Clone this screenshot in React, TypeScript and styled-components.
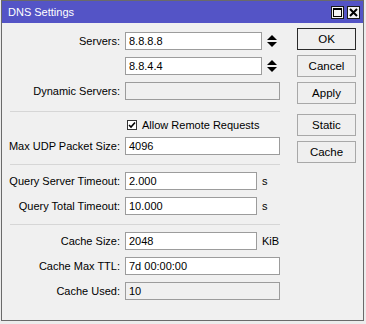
import React from "react";
import styled, { createGlobalStyle } from "styled-components";

const Global = createGlobalStyle`
  html, body { margin: 0; padding: 0; background: #f0f0f0; }
  body { font-family: "Liberation Sans", Arial, sans-serif; font-size: 11px; color: #000; }
`;

const Frame = styled.div`
  width: 366px;
  height: 324px;
  box-sizing: border-box;
  padding: 0 2px 3px 1px;
  background: #ececec;
`;

const Window = styled.div`
  height: 100%;
  box-sizing: border-box;
  border: 1px solid #6a6a6a;
  background: #f0f0f0;
  display: flex;
  flex-direction: column;
`;

const TitleBar = styled.div`
  height: 22px;
  flex: none;
  background: #5454c6;
  color: #fff;
  display: flex;
  align-items: center;
  justify-content: space-between;
  padding: 0 3px 0 6px;
  font-size: 11px;
`;

const TitleButtons = styled.div`
  display: flex;
  gap: 3px;
`;

const TitleButton = styled.div`
  width: 13px;
  height: 13px;
  box-sizing: border-box;
  border: 1px solid #1a1a1a;
  background: #f4f4f4;
  display: flex;
  align-items: center;
  justify-content: center;
`;

const Body = styled.div`
  display: flex;
  flex: 1;
`;

const Form = styled.div`
  width: 278px;
  padding-top: 9px;
  display: flex;
  flex-direction: column;
  gap: 7px;
`;

const Row = styled.div<{ $h?: number }>`
  display: grid;
  grid-template-columns: 118px 155px;
  column-gap: 5px;
  align-items: center;
  height: ${(p) => p.$h ?? 18}px;
`;

const Label = styled.div`
  text-align: right;
  white-space: nowrap;
`;

const Field = styled.div`
  display: flex;
  align-items: center;
  height: 100%;
`;

const Input = styled.div<{ $w?: number; $disabled?: boolean }>`
  width: ${(p) => p.$w ?? 155}px;
  height: 18px;
  box-sizing: border-box;
  border: 1px solid #9c9c9c;
  background: ${(p) => (p.$disabled ? "#f0f0f0" : "#ffffff")};
  padding-left: 3px;
  display: flex;
  align-items: center;
  white-space: nowrap;
  overflow: hidden;
`;

const Spinner = styled.div`
  width: 18px;
  padding-left: 5px;
  box-sizing: border-box;
  display: flex;
  align-items: center;
`;

const Unit = styled.span`
  margin-left: 5px;
`;

const Separator = styled.div<{ $top: number }>`
  height: 1px;
  margin: ${(p) => p.$top}px 0 0 8px;
  background: #d6d6d6;
`;

const CheckBox = styled.span`
  width: 10px;
  height: 10px;
  box-sizing: border-box;
  border: 1px solid #333;
  background: #fff;
  margin-left: 2px;
  margin-right: 5px;
  display: flex;
  align-items: center;
  justify-content: center;
`;

const ButtonCol = styled.div`
  margin-left: 17px;
  padding-top: 5px;
  display: flex;
  flex-direction: column;
  gap: 5px;
`;

const Button = styled.div<{ $default?: boolean; $space?: number }>`
  width: 59px;
  height: 22px;
  box-sizing: border-box;
  border: 1px solid ${(p) => (p.$default ? "#2a2a2a" : "#a8a8a8")};
  background: #efefef;
  display: flex;
  align-items: center;
  justify-content: center;
  margin-top: ${(p) => p.$space ?? 0}px;
  font-size: 11.5px;
`;

const Arrows = () => (
  <Spinner>
    <svg width="10" height="12" viewBox="0 0 10 12">
      <path d="M0 5 L5 0 L10 5 Z" fill="#000" />
      <path d="M0 7 L10 7 L5 12 Z" fill="#000" />
    </svg>
  </Spinner>
);

export default function App() {
  return (
    <>
      <Global />
      <Frame>
        <Window>
          <TitleBar>
            <span>DNS Settings</span>
            <TitleButtons>
              <TitleButton>
                <svg width="9" height="9" viewBox="0 0 9 9">
                  <rect x="0.5" y="0.5" width="8" height="8" fill="none" stroke="#000" />
                  <rect x="0" y="0" width="9" height="2" fill="#000" />
                </svg>
              </TitleButton>
              <TitleButton>
                <svg width="9" height="9" viewBox="0 0 9 9">
                  <path d="M1 1 L8 8 M8 1 L1 8" stroke="#000" strokeWidth="2" />
                </svg>
              </TitleButton>
            </TitleButtons>
          </TitleBar>
          <Body>
            <Form>
              <Row>
                <Label>Servers:</Label>
                <Field>
                  <Input $w={137}>8.8.8.8</Input>
                  <Arrows />
                </Field>
              </Row>
              <Row>
                <Label />
                <Field>
                  <Input $w={137}>8.8.4.4</Input>
                  <Arrows />
                </Field>
              </Row>
              <Row>
                <Label>Dynamic Servers:</Label>
                <Field>
                  <Input $disabled />
                </Field>
              </Row>
              <Separator $top={4} />
              <Row $h={11}>
                <Label />
                <Field>
                  <CheckBox>
                    <svg width="8" height="8" viewBox="0 0 8 8">
                      <path d="M1 4 L3 6 L7 1.5" fill="none" stroke="#000" strokeWidth="1.6" />
                    </svg>
                  </CheckBox>
                  <span>Allow Remote Requests</span>
                </Field>
              </Row>
              <Row>
                <Label>Max UDP Packet Size:</Label>
                <Field>
                  <Input>4096</Input>
                </Field>
              </Row>
              <Separator $top={2} />
              <Row>
                <Label>Query Server Timeout:</Label>
                <Field>
                  <Input $w={132}>2.000</Input>
                  <Unit>s</Unit>
                </Field>
              </Row>
              <Row>
                <Label>Query Total Timeout:</Label>
                <Field>
                  <Input $w={132}>10.000</Input>
                  <Unit>s</Unit>
                </Field>
              </Row>
              <Separator $top={2} />
              <Row>
                <Label>Cache Size:</Label>
                <Field>
                  <Input $w={132}>2048</Input>
                  <Unit>KiB</Unit>
                </Field>
              </Row>
              <Row>
                <Label>Cache Max TTL:</Label>
                <Field>
                  <Input>7d 00:00:00</Input>
                </Field>
              </Row>
              <Row>
                <Label>Cache Used:</Label>
                <Field>
                  <Input $disabled>10</Input>
                </Field>
              </Row>
            </Form>
            <ButtonCol>
              <Button $default>OK</Button>
              <Button>Cancel</Button>
              <Button>Apply</Button>
              <Button $space={5}>Static</Button>
              <Button>Cache</Button>
            </ButtonCol>
          </Body>
        </Window>
      </Frame>
    </>
  );
}
